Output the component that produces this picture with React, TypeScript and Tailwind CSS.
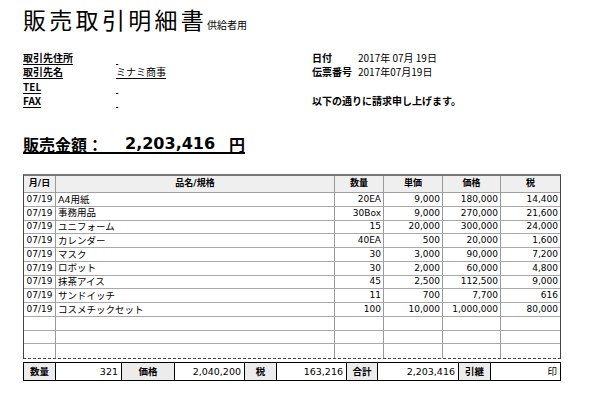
import React from "react";

const items: string[][] = [
  ["07/19", "A4用紙", "20EA", "9,000", "180,000", "14,400"],
  ["07/19", "事務用品", "30Box", "9,000", "270,000", "21,600"],
  ["07/19", "ユニフォーム", "15", "20,000", "300,000", "24,000"],
  ["07/19", "カレンダー", "40EA", "500", "20,000", "1,600"],
  ["07/19", "マスク", "30", "3,000", "90,000", "7,200"],
  ["07/19", "ロボット", "30", "2,000", "60,000", "4,800"],
  ["07/19", "抹茶アイス", "45", "2,500", "112,500", "9,000"],
  ["07/19", "サンドイッチ", "11", "700", "7,700", "616"],
  ["07/19", "コスメチックセット", "100", "10,000", "1,000,000", "80,000"],
  ["", "", "", "", "", ""],
  ["", "", "", "", "", ""],
  ["", "", "", "", "", ""],
];

const font = { fontFamily: '"DejaVu Sans", "Noto Sans CJK JP", sans-serif' };

export default function App() {
  return (
    <div className="w-[600px] h-[400px] bg-white text-black overflow-hidden font-['DejaVu_Sans','Noto_Sans_CJK_JP',sans-serif]">
      {/* Title */}
      <div className="pt-[8px] pl-[23px] flex items-end h-[31px]">
        <h1 className="text-[23px] leading-[23px] tracking-[3.3px] font-normal font-['Noto_Sans_CJK_JP',sans-serif]">
          販売取引明細書
        </h1>
        <span className="text-[10px] leading-none mb-[1px] font-['Noto_Sans_CJK_JP',sans-serif]">
          供給者用
        </span>
      </div>

      {/* Info */}
      <div className="mt-[19px] flex text-[10px] font-['Noto_Sans_CJK_JP',sans-serif]">
        <div className="w-[312px] pl-[23px] grid grid-cols-[93px_auto] auto-rows-[14.5px] items-center">
          <span className="font-bold underline underline-offset-2">取引先住所</span>
          <span className="underline underline-offset-2">{"\u00a0"}</span>
          <span className="font-bold underline underline-offset-2">取引先名</span>
          <span className="underline underline-offset-2">ミナミ商事</span>
          <span className="font-bold underline underline-offset-2">TEL</span>
          <span className="underline underline-offset-2">{"\u00a0"}</span>
          <span className="font-bold underline underline-offset-2">FAX</span>
          <span className="underline underline-offset-2">{"\u00a0"}</span>
        </div>
        <div className="grid grid-cols-[46px_auto] auto-rows-[14.5px] items-center">
          <span className="font-bold">日付</span>
          <span>2017年 07月 19日</span>
          <span className="font-bold">伝票番号</span>
          <span>2017年07月19日</span>
          <span className="col-span-2"></span>
          <span className="col-span-2 font-bold">以下の通りに請求申し上げます。</span>
        </div>
      </div>

      {/* Amount */}
      <div className="mt-[28px] pl-[23px] flex">
        <div className="flex items-center h-[18px] text-[16px] leading-none font-bold border-b-2 border-black font-['Noto_Sans_CJK_JP',sans-serif]">
          <span>販売金額：</span>
          <span className="ml-[22px] font-['DejaVu_Sans',sans-serif]">2,203,416</span>
          <span className="ml-[14px]">円</span>
        </div>
      </div>

      {/* Table */}
      <div
        className="mt-[20px] ml-[23px] w-[538px] border-t-2 border-l border-r border-b border-t-[#777] border-l-[#444] border-r-[#444] border-b-[#444] [border-bottom-style:dashed] text-[9px]"
        style={font}
      >
        <div className="grid grid-cols-[32px_279px_49px_59px_58px_1fr] h-[17px] border-b border-[#a0a0a0] bg-[#efefef] font-bold text-[9px]">
          {["月/日", "品名/規格", "数量", "単価", "価格", "税"].map((h, i) => (
            <div
              key={i}
              className={`flex items-center justify-center ${i < 5 ? "border-r border-[#999]" : ""}`}
            >
              {h}
            </div>
          ))}
        </div>
        {items.map((r, ri) => (
          <div
            key={ri}
            className={`grid grid-cols-[32px_279px_49px_59px_58px_1fr] h-[13.75px] ${ri < items.length - 1 ? "border-b border-[#a8a8a8]" : ""}`}
          >
            {r.map((c, ci) => (
              <div
                key={ci}
                className={`flex items-center leading-none whitespace-nowrap ${ci < 5 ? "border-r border-[#999]" : ""} ${
                  ci === 0 ? "justify-center" : ci === 1 ? "pl-[2px] text-[9.5px]" : "justify-end pr-[2px]"
                }`}
              >
                {c}
              </div>
            ))}
          </div>
        ))}
      </div>

      {/* Footer */}
      <div
        className="mt-[3px] ml-[23px] w-[538px] h-[19px] border border-black grid grid-cols-[32px_66px_53px_70px_32px_70px_31px_81px_32px_1fr] text-[9.5px]"
        style={font}
      >
        {[
          ["数量", true],
          ["321", false],
          ["価格", true],
          ["2,040,200", false],
          ["税", true],
          ["163,216", false],
          ["合計", true],
          ["2,203,416", false],
          ["引継", true],
          ["印", false],
        ].map(([t, lab], i) => (
          <div
            key={i}
            className={`flex items-center leading-none ${i < 9 ? "border-r border-black" : ""} ${
              lab ? "justify-center bg-[#ececec] font-bold" : "justify-end pr-[3px]"
            }`}
          >
            {t as string}
          </div>
        ))}
      </div>
    </div>
  );
}
